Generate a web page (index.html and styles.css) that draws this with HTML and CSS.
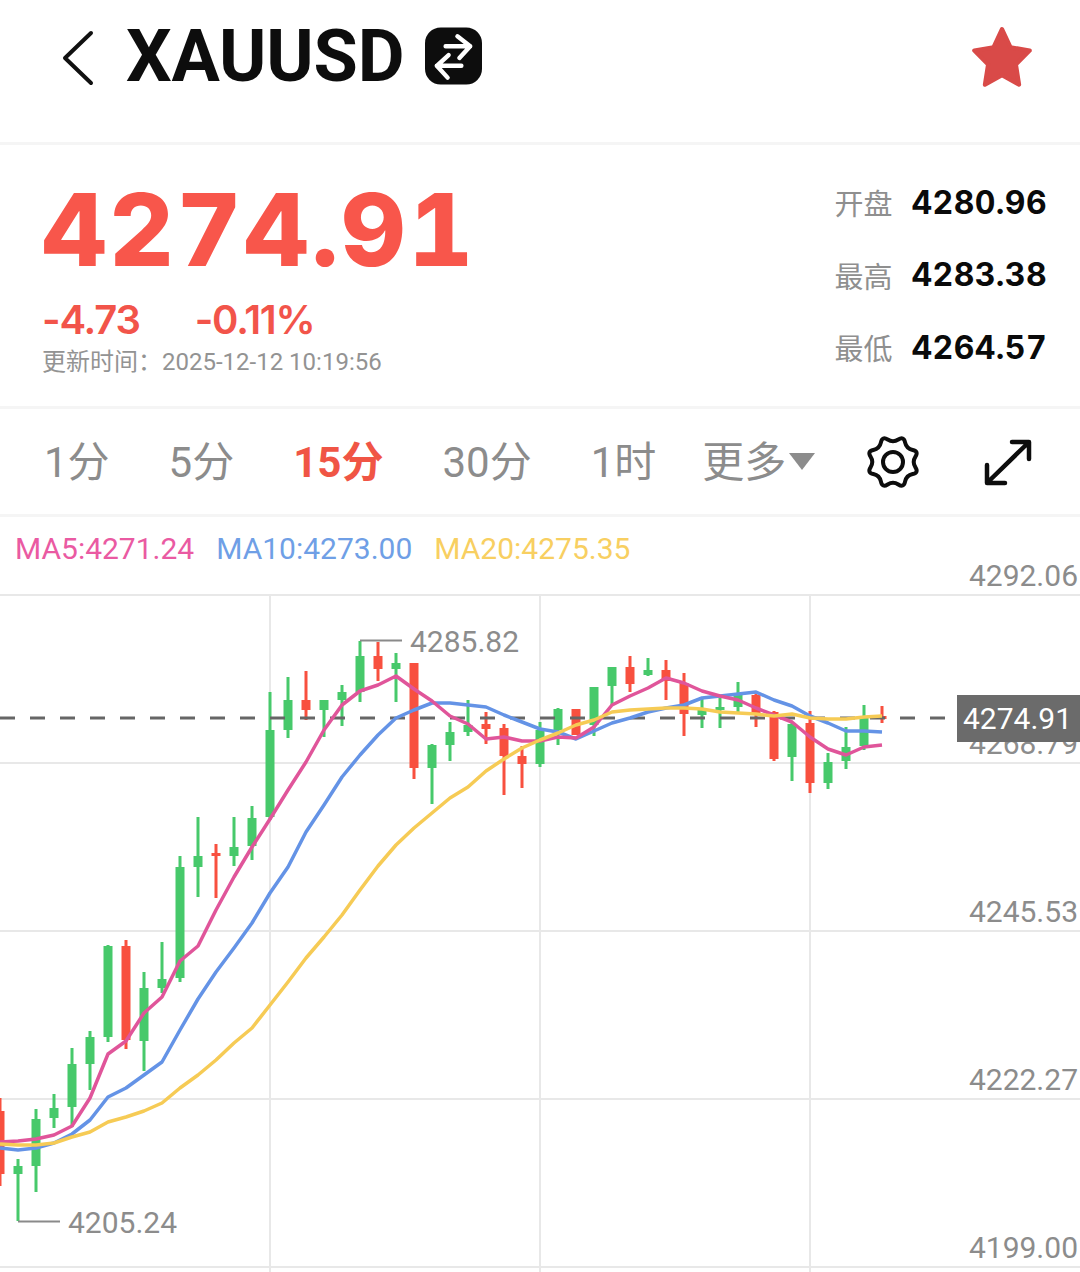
FILE: index.html
```html
<!DOCTYPE html>
<html lang="zh-CN">
<head>
    <meta charset="UTF-8">
    <meta name="viewport" content="width=device-width, initial-scale=1.0">
    <title>XAUUSD</title>
    <link rel="stylesheet" href="styles.css">
</head>
<body>

<div class="page">
    <!-- Top bar -->
    <div class="top-bar">
        <svg class="back-icon" width="34" height="56" viewBox="0 0 34 56">
            <path d="M30 3L4 28L30 53"/>
        </svg>
        <span class="symbol">XAUUSD</span>
        <svg class="swap-icon" width="57" height="58" viewBox="0 0 58 58">
            <rect width="58" height="58" rx="16"/>
            <path d="M21 19H46M33 9L46 19L35 31M37 39H12M24 28L12 39L23 51"/>
        </svg>
        <svg class="star-icon" width="66" height="66" viewBox="0 0 62 62">
            <path d="M31 4L39 21L57 24L44 37L47 56L31 47L15 56L18 37L5 24L23 21Z"/>
        </svg>
    </div>

    <!-- Quote -->
    <div class="quote">
        <div class="quote-main">
            <div class="price">4274.91</div>
            <div class="change">
                <span>-4.73</span>
                <span>-0.11%</span>
            </div>
            <div class="updated">更新时间：2025-12-12 10:19:56</div>
        </div>
        <div class="quote-stats">
            <div class="stat"><span class="stat-label">开盘</span><span class="stat-value">4280.96</span></div>
            <div class="stat"><span class="stat-label">最高</span><span class="stat-value">4283.38</span></div>
            <div class="stat"><span class="stat-label">最低</span><span class="stat-value">4264.57</span></div>
        </div>
    </div>

    <!-- Period tabs -->
    <div class="tabs">
        <span class="tab">1分</span>
        <span class="tab">5分</span>
        <span class="tab active">15分</span>
        <span class="tab">30分</span>
        <span class="tab">1时</span>
        <span class="tab tab-more">更多<i class="caret"></i></span>
        <svg class="gear-icon" width="54" height="54" viewBox="0 0 54 54">
            <path d="M49.45 32.35Q52.9 37.7 46.65 39.05Q40.4 40.4 39.05 46.65Q37.7 52.9 32.35 49.45Q27 46 21.65 49.45Q16.3 52.9 14.95 46.65Q13.6 40.4 7.35 39.05Q1.1 37.7 4.55 32.35Q8 27 4.55 21.65Q1.1 16.3 7.35 14.95Q13.6 13.6 14.95 7.35Q16.3 1.1 21.65 4.55Q27 8 32.35 4.55Q37.7 1.1 39.05 7.35Q40.4 13.6 46.65 14.95Q52.9 16.3 49.45 21.65Q46 27 49.45 32.35Z"/>
            <circle cx="27" cy="27" r="10"/>
        </svg>
        <svg class="expand-icon" width="48" height="48" viewBox="0 0 48 48">
            <path d="M5 43L43 6M28 4H45V21M3 27V45H21"/>
        </svg>
    </div>

    <!-- Moving averages -->
    <div class="legend">
        <span class="ma5">MA5:4271.24</span>
        <span class="ma10">MA10:4273.00</span>
        <span class="ma20">MA20:4275.35</span>
    </div>

    <!-- Chart, drawn in page coordinates -->
    <svg class="chart" width="1080" height="712" viewBox="0 560 1080 712">
        <path class="grid" d="M0 595H1080M0 763H1080M0 931H1080M0 1099H1080M0 1267H1080M270 595V1272M540 595V1272M810 595V1272"/>

        <path class="wick up" d="M18 1159V1221M36 1109V1192M54 1094V1128M72 1048V1127M90 1031V1090M108 945V1042M144 972V1071M162 942V993M180 856V982M198 817V897M234 817V866M252 806V860M270 692V820M288 677V738M324 700V737M342 685V726M360 641V702M396 653V702M432 744V804M450 722V761M468 700V736M540 722V767M558 708V745M594 687V736M612 667V705M648 658V676M702 699V728M720 698V728M738 682V712M792 723V781M828 753V789M846 727V769M864 705V750"/>
        <path class="body up" d="M18 1166V1174M36 1119V1166M54 1108V1118M72 1064V1107M90 1037V1064M108 946V1037M144 988V1041M162 979V988M180 867V978M198 856V867M234 847V856M252 818V846M270 730V817M288 700V730M324 700V710M342 692V700M360 656V692M396 663V669M432 745V768M450 732V745M468 725V732M540 730V764M558 709V730M594 687V725M612 667V686M648 670V675M702 708V715M720 707V710M738 695V707M792 724V757M828 762V783M846 747V761M864 718V746"/>
        <path class="wick down" d="M0 1098V1186M126 940V1049M216 844V898M306 671V720M378 642V681M414 663V779M486 712V744M504 724V795M522 746V788M576 709V735M630 656V692M666 660V700M684 673V736M756 691V727M774 711V761M810 711V793M882 706V723"/>
        <path class="body down" d="M0 1111V1174M126 946V1040M216 853V856M306 700V710M378 656V669M414 663V768M486 724V729M504 728V756M522 756V764M576 709V735M630 667V684M666 670V681M684 683V714M756 695V715M774 712V759M810 723V783M882 716V719"/>

        <path class="last-line" d="M0 718H946"/>

        <polyline class="ma ma10-line" points="0,1148 18,1150 36,1148 54,1143 72,1134 90,1120 108,1097 126,1088 144,1075 162,1062 180,1030 198,999 216,972 234,948 252,923 270,893 288,867 306,832 324,805 342,777 360,755 378,735 396,718 414,710 432,703 450,703 468,705 486,707 504,715 522,722 540,729 558,732 576,739 594,731 612,723 630,718 648,712 666,708 684,705 702,698 720,696 738,694 756,692 774,700 792,706 810,716 828,723 846,731 864,731 882,732"/>
        <polyline class="ma ma5-line" points="0,1142 18,1141 36,1139 54,1135 72,1126 90,1098 108,1054 126,1041 144,1013 162,997 180,961 198,946 216,910 234,877 252,847 270,819 288,790 306,762 324,730 342,705 360,691 378,685 396,676 414,689 432,701 450,716 468,724 486,739 504,737 522,741 540,741 558,737 576,738 594,727 612,705 630,696 648,688 666,678 684,683 702,691 720,696 738,700 756,708 774,715 792,722 810,737 828,749 846,755 864,747 882,745"/>
        <polyline class="ma ma20-line" points="0,1144 18,1145 36,1145 54,1143 72,1137 90,1132 108,1122 126,1117 144,1111 162,1103 180,1088 198,1075 216,1060 234,1043 252,1028 270,1005 288,982 306,958 324,937 342,915 360,890 378,866 396,845 414,828 432,813 450,798 468,787 486,771 504,759 522,748 540,740 558,733 576,725 594,720 612,712 630,710 648,709 666,708 684,708 702,709 720,712 738,713 756,714 774,716 792,714 810,718 828,719 846,719 864,717 882,716"/>

        <path class="marker" d="M360 640.500H402M18 1221.500H60"/>
        <text class="price-label" x="410" y="652">4285.82</text>
        <text class="price-label" x="68" y="1233">4205.24</text>

        <text class="axis-label" x="1078" y="586">4292.06</text>
        <text class="axis-label" x="1078" y="754">4268.79</text>
        <text class="axis-label" x="1078" y="922">4245.53</text>
        <text class="axis-label" x="1078" y="1090">4222.27</text>
        <text class="axis-label" x="1078" y="1258">4199.00</text>

        <rect class="last-tag" x="957" y="695" width="123" height="47"/>
        <text class="last-text" x="963" y="729">4274.91</text>
    </svg>
</div>

</body>
</html>
```

FILE: styles.css
```css
body {
    margin: 0;
    background-color: #fff;
    font-family: Roboto, "Noto Sans CJK SC", sans-serif;
}
.page {
    width: 1080px;
    height: 1272px;
    overflow: hidden;
}

/* top bar */
.top-bar {
    display: flex;
    align-items: center;
    height: 112px;
    padding-left: 61px;
    padding-right: 45px;
    border-bottom: 3px solid #f5f5f5;
    padding-bottom: 30px;
}
.back-icon {
    margin-top: 3px;
    fill: none;
    stroke: #111;
    stroke-width: 4;
    stroke-linecap: round;
    stroke-linejoin: round;
}
.symbol {
    margin-left: 31px;
    font-size: 72px;
    font-weight: 700;
    color: #0d0d0d;
    letter-spacing: -0.2px;
}
.swap-icon {
    margin-left: 21px;
}
.swap-icon rect {
    fill: #0d0d0d;
}
.swap-icon path {
    fill: none;
    stroke: #fff;
    stroke-width: 4.500;
    stroke-linecap: round;
    stroke-linejoin: round;
}
.star-icon {
    margin-left: auto;
    margin-top: 4px;
    fill: #d94a48;
    stroke: #d94a48;
    stroke-width: 4;
    stroke-linejoin: round;
}

/* quote */
.quote {
    display: flex;
    justify-content: space-between;
    height: 261px;
    padding: 0 33px 0 42px;
    border-bottom: 3px solid #f5f5f5;
}
.price {
    margin-top: 30px;
    font-family: Inter, sans-serif;
    font-size: 100px;
    line-height: 110px;
    font-weight: 800;
    letter-spacing: 2.800px;
    font-feature-settings: "tnum";
    color: #f8564b;
}
.change {
    display: flex;
    gap: 55px;
    margin-top: 13px;
    font-family: Inter, sans-serif;
    font-size: 40px;
    line-height: 44px;
    font-weight: 600;
    letter-spacing: -1.200px;
    color: #f2544a;
}
.updated {
    margin-top: 5px;
    font-size: 24px;
    line-height: 30px;
    color: #939393;
}
.quote-stats {
    display: flex;
    flex-direction: column;
    gap: 32.500px;
    margin-top: 37px;
}
.stat {
    display: flex;
    align-items: center;
    gap: 19px;
    height: 40px;
}
.stat-label {
    font-size: 29px;
    color: #8f8f8f;
}
.stat-value {
    font-family: Inter, sans-serif;
    font-size: 32px;
    font-weight: 700;
    letter-spacing: 0.4px;
    font-feature-settings: "tnum";
    color: #0a0a0a;
}

/* tabs */
.tabs {
    display: flex;
    align-items: center;
    gap: 59px;
    height: 105px;
    padding-left: 44px;
    border-bottom: 3px solid #f5f5f5;
}
.tab {
    margin-top: -6px;
    font-size: 42px;
    color: #8c8c8c;
}
.tab.active {
    font-weight: 700;
    color: #f05545;
}
.tab-more {
    display: flex;
    align-items: center;
    margin-left: -13px;
}
.caret {
    width: 0;
    height: 0;
    margin-left: 3px;
    margin-top: 6px;
    border-left: 13px solid transparent;
    border-right: 13px solid transparent;
    border-top: 17px solid #8c8c8c;
}
.gear-icon {
    flex: none;
    margin-left: -8px;
    fill: none;
    stroke: #0d0d0d;
    stroke-width: 4;
}
.expand-icon {
    flex: none;
    margin-left: 5px;
    fill: none;
    stroke: #0d0d0d;
    stroke-width: 4.500;
    stroke-linecap: round;
    stroke-linejoin: round;
}

/* moving averages */
.legend {
    display: flex;
    gap: 22px;
    height: 43px;
    padding-left: 15px;
    font-size: 30px;
    line-height: 64px;
}
.ma5 { color: #ea5aa2; }
.ma10 { color: #6f9fe6; }
.ma20 { color: #f8cf61; }

/* chart */
.chart {
    display: block;
}
.grid {
    fill: none;
    stroke: #e8e8e8;
    stroke-width: 2;
}
.wick, .body, .ma, .marker {
    fill: none;
}
.wick {
    stroke-width: 3;
}
.body {
    stroke-width: 9;
}
.up {
    stroke: #47c96b;
}
.down {
    stroke: #f8503f;
}
.last-line {
    fill: none;
    stroke: #666;
    stroke-width: 3;
    stroke-dasharray: 15 15;
}
.ma {
    stroke-width: 3.500;
    stroke-linejoin: round;
}
.ma5-line { stroke: #e0559a; }
.ma10-line { stroke: #6493e6; }
.ma20-line { stroke: #f6cb55; }
.marker {
    stroke: #8a8a8a;
    stroke-width: 2;
}
.price-label, .axis-label {
    font-size: 30px;
    fill: #8c8c8c;
}
.axis-label {
    text-anchor: end;
}
.last-tag {
    fill: #6b6b6b;
}
.last-text {
    font-size: 30px;
    fill: #fff;
}
```
